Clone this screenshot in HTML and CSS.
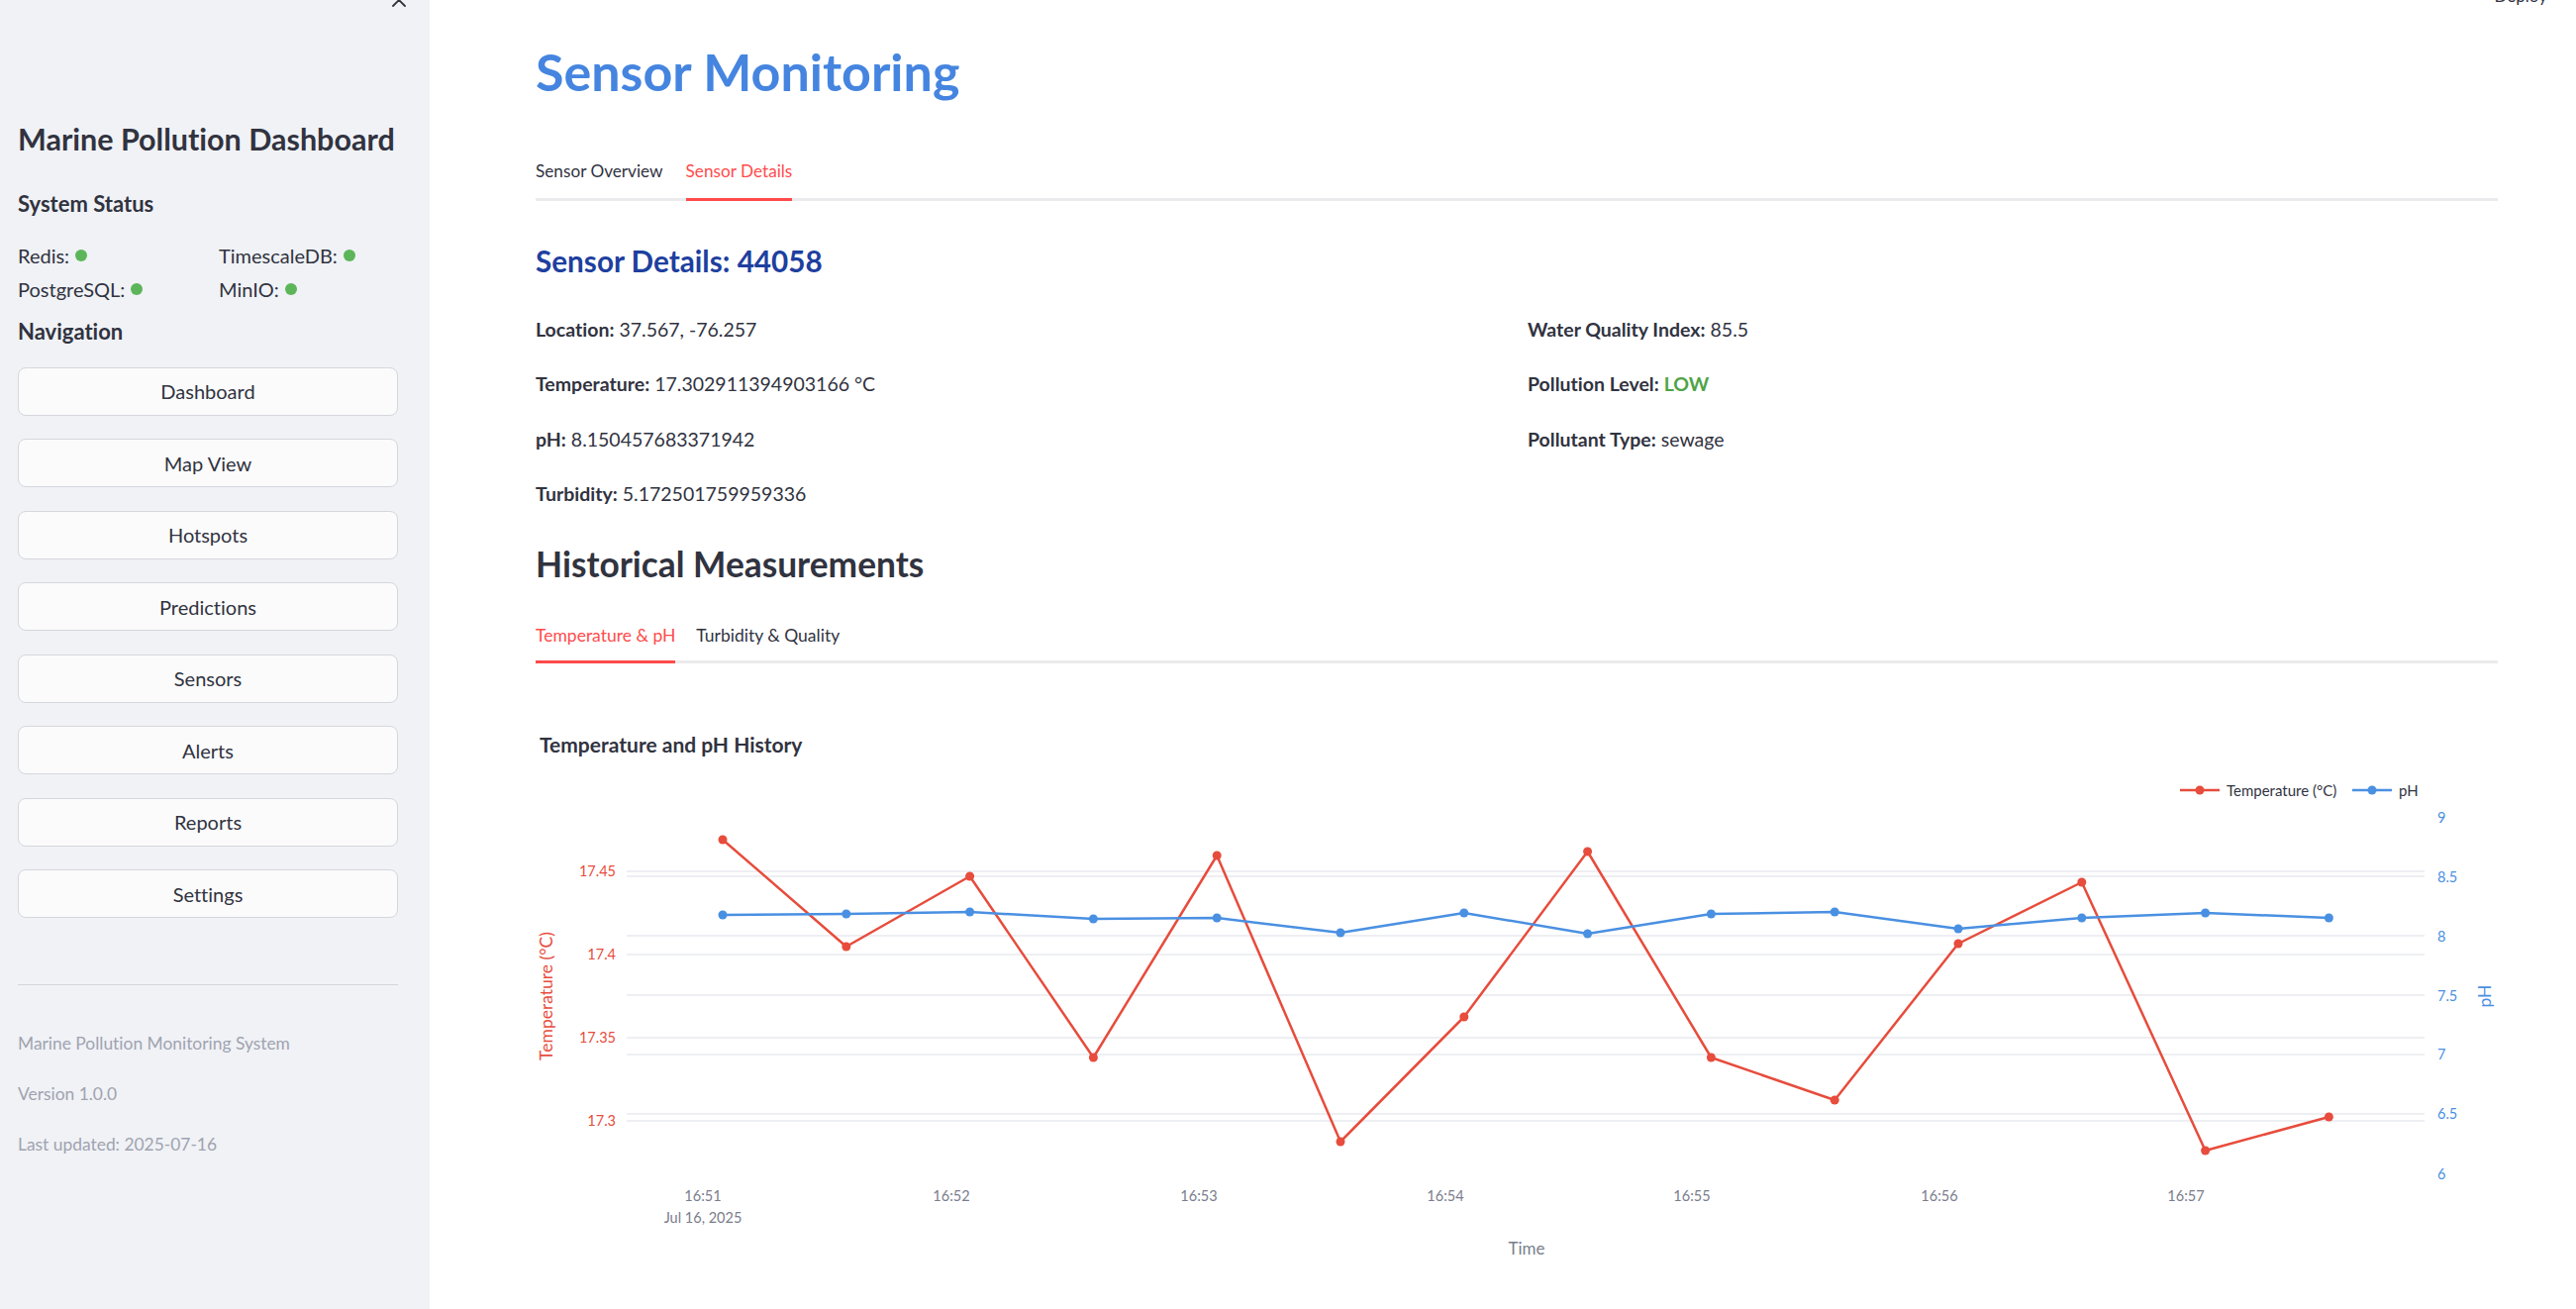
FILE: index.html
```html
<!DOCTYPE html>
<html lang="en">
<head>
<meta charset="utf-8">
<title>Sensor Monitoring</title>
<link rel="stylesheet" href="styles.css">
</head>
<body>
<div class="app">
  <aside class="sidebar">
    <svg class="close" viewBox="0 0 16 16" width="16" height="16" aria-hidden="true"><path d="M2 2 L14 14 M14 2 L2 14" stroke="#31333f" stroke-width="1.8" stroke-linecap="round" fill="none"/></svg>
    <h1 class="sb-title">Marine Pollution Dashboard</h1>
    <h3 class="sb-h">System Status</h3>
    <div class="status">
      <div class="status-item">Redis: <span class="dot"></span></div>
      <div class="status-item">TimescaleDB: <span class="dot"></span></div>
      <div class="status-item">PostgreSQL: <span class="dot"></span></div>
      <div class="status-item">MinIO: <span class="dot"></span></div>
    </div>
    <h3 class="sb-h sb-h-nav">Navigation</h3>
    <nav class="nav">
      <button class="nav-btn">Dashboard</button>
      <button class="nav-btn">Map View</button>
      <button class="nav-btn">Hotspots</button>
      <button class="nav-btn">Predictions</button>
      <button class="nav-btn">Sensors</button>
      <button class="nav-btn">Alerts</button>
      <button class="nav-btn">Reports</button>
      <button class="nav-btn">Settings</button>
    </nav>
    <hr class="sb-rule">
    <div class="sb-foot">
      <p>Marine Pollution Monitoring System</p>
      <p>Version 1.0.0</p>
      <p>Last updated: 2025-07-16</p>
    </div>
  </aside>

  <main class="main">
    <div class="deploy">Deploy</div>
    <h1 class="page-title">Sensor Monitoring</h1>
    <div class="tabs">
      <div class="tab">Sensor Overview</div>
      <div class="tab active">Sensor Details</div>
    </div>

    <h3 class="details-title">Sensor Details: 44058</h3>
    <div class="cols">
      <div class="col">
        <p><b>Location:</b> 37.567, -76.257</p>
        <p><b>Temperature:</b> 17.302911394903166 °C</p>
        <p><b>pH:</b> 8.150457683371942</p>
        <p><b>Turbidity:</b> 5.172501759959336</p>
      </div>
      <div class="col">
        <p><b>Water Quality Index:</b> 85.5</p>
        <p><b>Pollution Level:</b> <b class="low">LOW</b></p>
        <p><b>Pollutant Type:</b> sewage</p>
      </div>
    </div>

    <h2 class="hist">Historical Measurements</h2>
    <div class="tabs subtabs">
      <div class="tab active">Temperature &amp; pH</div>
      <div class="tab">Turbidity &amp; Quality</div>
    </div>

    <div class="chart">
      <svg class="plot" viewBox="0 0 1982 600" width="1982" height="600">
        <text class="plot-title" x="4" y="60">Temperature and pH History</text>

        <g class="grid">
          <line x1="92" x2="1908" y1="180" y2="180"/>
          <line x1="92" x2="1908" y1="264" y2="264"/>
          <line x1="92" x2="1908" y1="348" y2="348"/>
          <line x1="92" x2="1908" y1="432" y2="432"/>
          <line x1="92" x2="1908" y1="185" y2="185"/>
          <line x1="92" x2="1908" y1="245" y2="245"/>
          <line x1="92" x2="1908" y1="305" y2="305"/>
          <line x1="92" x2="1908" y1="365" y2="365"/>
          <line x1="92" x2="1908" y1="425" y2="425"/>
        </g>

        <g class="ytick-l">
          <text x="81" y="185">17.45</text>
          <text x="81" y="269">17.4</text>
          <text x="81" y="353">17.35</text>
          <text x="81" y="437">17.3</text>
        </g>
        <g class="ytick-r">
          <text x="1921" y="131">9</text>
          <text x="1921" y="191">8.5</text>
          <text x="1921" y="251">8</text>
          <text x="1921" y="311">7.5</text>
          <text x="1921" y="370">7</text>
          <text x="1921" y="430">6.5</text>
          <text x="1921" y="491">6</text>
        </g>
        <text class="ytitle-l" transform="translate(17 306) rotate(-90)">Temperature (°C)</text>
        <text class="ytitle-r" transform="translate(1975 306) rotate(-90)">pH</text>

        <g class="xtick">
          <text x="169" y="513">16:51</text>
          <text x="169" y="535">Jul 16, 2025</text>
          <text x="420" y="513">16:52</text>
          <text x="670" y="513">16:53</text>
          <text x="919" y="513">16:54</text>
          <text x="1168" y="513">16:55</text>
          <text x="1418" y="513">16:56</text>
          <text x="1667" y="513">16:57</text>
        </g>
        <text class="xtitle" x="1001" y="567">Time</text>

        <g class="trace temp">
          <polyline points="189,148 313.8,256 438.6,185 563.4,368 688.2,164 813,453 937.8,327 1062.6,160 1187.4,368 1312.2,411 1437,253 1561.8,191 1686.6,462 1811.4,428"/>
          <circle cx="189" cy="148" r="4.5"/><circle cx="313.8" cy="256" r="4.5"/><circle cx="438.6" cy="185" r="4.5"/><circle cx="563.4" cy="368" r="4.5"/><circle cx="688.2" cy="164" r="4.5"/><circle cx="813" cy="453" r="4.5"/><circle cx="937.8" cy="327" r="4.5"/><circle cx="1062.6" cy="160" r="4.5"/><circle cx="1187.4" cy="368" r="4.5"/><circle cx="1312.2" cy="411" r="4.5"/><circle cx="1437" cy="253" r="4.5"/><circle cx="1561.8" cy="191" r="4.5"/><circle cx="1686.6" cy="462" r="4.5"/><circle cx="1811.4" cy="428" r="4.5"/>
        </g>
        <g class="trace ph">
          <polyline points="189,224 313.8,223 438.6,221 563.4,228 688.2,227 813,242 937.8,222 1062.6,243 1187.4,223 1312.2,221 1437,238 1561.8,227 1686.6,222 1811.4,227"/>
          <circle cx="189" cy="224" r="4.5"/><circle cx="313.8" cy="223" r="4.5"/><circle cx="438.6" cy="221" r="4.5"/><circle cx="563.4" cy="228" r="4.5"/><circle cx="688.2" cy="227" r="4.5"/><circle cx="813" cy="242" r="4.5"/><circle cx="937.8" cy="222" r="4.5"/><circle cx="1062.6" cy="243" r="4.5"/><circle cx="1187.4" cy="223" r="4.5"/><circle cx="1312.2" cy="221" r="4.5"/><circle cx="1437" cy="238" r="4.5"/><circle cx="1561.8" cy="227" r="4.5"/><circle cx="1686.6" cy="222" r="4.5"/><circle cx="1811.4" cy="227" r="4.5"/>
        </g>

        <g class="legend">
          <line class="lg-temp" x1="1661" x2="1701" y1="98" y2="98"/>
          <circle class="lg-temp-dot" cx="1681" cy="98" r="4.5"/>
          <text x="1708" y="103.5">Temperature (°C)</text>
          <line class="lg-ph" x1="1835" x2="1875" y1="98" y2="98"/>
          <circle class="lg-ph-dot" cx="1855" cy="98" r="4.5"/>
          <text x="1882" y="103.5">pH</text>
        </g>
      </svg>
    </div>
  </main>
</div>
</body>
</html>
```
FILE: styles.css
```css
html, body {
  margin: 0;
  padding: 0;
  background: #ffffff;
}
body {
  font-family: Lato, "Noto Sans", sans-serif;
  font-variant-ligatures: none;
  color: #31333f;
  overflow: hidden;
}
.app {
  display: flex;
  height: 1322px;
}

/* ---------- Sidebar ---------- */
.sidebar {
  position: relative;
  flex: none;
  width: 434px;
  box-sizing: border-box;
  padding: 120px 32px 0 18px;
  background: #f0f2f6;
}
.close {
  position: absolute;
  left: 395px;
  top: -8px;
}
.sb-title {
  margin: 0;
  font-size: 30.5px;
  font-weight: 700;
  line-height: 40px;
  white-space: nowrap;
}
.sb-h {
  margin: 31px 0 0;
  font-size: 22px;
  font-weight: 700;
  line-height: 30px;
}
.sb-h-nav {
  margin-top: 11px;
}
.status {
  display: grid;
  grid-template-columns: 203px 1fr;
  grid-auto-rows: 34px;
  margin-top: 20px;
  font-size: 20px;
}
.status-item {
  display: flex;
  align-items: center;
  gap: 1px;
  white-space: pre;
}
.dot {
  display: inline-block;
  width: 12px;
  height: 12px;
  border-radius: 50%;
  background: #5db55a;
}
.nav {
  display: flex;
  flex-direction: column;
  gap: 23.5px;
  margin-top: 20.5px;
}
.nav-btn {
  height: 49px;
  box-sizing: border-box;
  border: 1px solid #d6d7dc;
  border-radius: 8px;
  background: #fbfbfc;
  font-family: Lato, "Noto Sans", sans-serif;
  font-variant-ligatures: none;
  font-size: 20px;
  color: #31333f;
  display: flex;
  align-items: center;
  justify-content: center;
  padding: 0;
}
.sb-rule {
  margin: 67px 0 0;
  height: 0;
  border: 0;
  border-top: 1.5px solid #d3d5db;
}
.sb-foot {
  padding-top: 22.5px;
}
.sb-foot p {
  margin: 21px 0 0;
  font-size: 17.4px;
  line-height: 30px;
  color: #a0a3b0;
}

/* ---------- Main ---------- */
.main {
  position: relative;
  flex: 1;
  min-width: 0;
  box-sizing: border-box;
  padding: 41.5px 79px 0 107px;
}
.deploy {
  position: absolute;
  right: 29px;
  top: -13px;
  font-size: 17px;
  line-height: 17px;
  color: #31333f;
}
.page-title {
  margin: 0;
  font-size: 52px;
  font-weight: 700;
  line-height: 60px;
  color: #4585e0;
}
.tabs {
  display: flex;
  gap: 23px;
  margin-top: 59.5px;
  border-bottom: 3px solid #ebebee;
}
.tab {
  font-size: 17.2px;
  line-height: 24px;
  padding-bottom: 15px;
  margin-bottom: -3px;
  border-bottom: 3px solid transparent;
  color: #31333f;
}
.tab.active {
  color: #ff4b4b;
  border-bottom-color: #ff4b4b;
}
.details-title {
  margin: 41px 0 0;
  font-size: 29.7px;
  font-weight: 700;
  line-height: 40px;
  color: #1e3f9f;
}
.cols {
  display: grid;
  grid-template-columns: 1fr 1fr;
  column-gap: 22px;
  margin-top: 34px;
  font-size: 19.5px;
}
.col p {
  margin: 0 0 25.3px;
  line-height: 30px;
}
.col p:last-child {
  margin-bottom: 0;
}
.low {
  color: #4fa447;
  font-weight: 700;
}
.hist {
  margin: 34px 0 0;
  font-size: 35.3px;
  font-weight: 700;
  line-height: 44px;
}
.subtabs {
  margin-top: 38px;
  gap: 21px;
}
.subtabs .tab {
  font-size: 17.5px;
  padding-bottom: 13px;
}
.chart {
  margin-top: 30px;
}
.plot {
  display: block;
  font-family: Lato, "Noto Sans", sans-serif;
}
.plot-title {
  font-size: 21px;
  font-weight: 700;
  fill: #31333f;
}
.grid line {
  stroke: #e9eaef;
  stroke-width: 1.6;
}
.ytick-l text {
  font-size: 14.5px;
  fill: #e74c3c;
  text-anchor: end;
}
.ytick-r text {
  font-size: 14.5px;
  fill: #4a90e2;
}
.ytitle-l {
  font-size: 17.5px;
  fill: #e74c3c;
  text-anchor: middle;
}
.ytitle-r {
  font-size: 17.5px;
  fill: #4a90e2;
  text-anchor: middle;
}
.xtick text {
  font-size: 14.5px;
  fill: #7a7d8c;
  text-anchor: middle;
}
.xtitle {
  font-size: 17px;
  fill: #7a7d8c;
  text-anchor: middle;
}
.trace polyline {
  fill: none;
  stroke-width: 2.5;
  stroke-linejoin: round;
}
.temp polyline { stroke: #e74c3c; }
.temp circle { fill: #e74c3c; }
.ph polyline { stroke: #4a90e2; }
.ph circle { fill: #4a90e2; }
.legend text {
  font-size: 15px;
  fill: #31333f;
}
.lg-temp { stroke: #e74c3c; stroke-width: 2.5; }
.lg-temp-dot { fill: #e74c3c; }
.lg-ph { stroke: #4a90e2; stroke-width: 2.5; }
.lg-ph-dot { fill: #4a90e2; }
```
